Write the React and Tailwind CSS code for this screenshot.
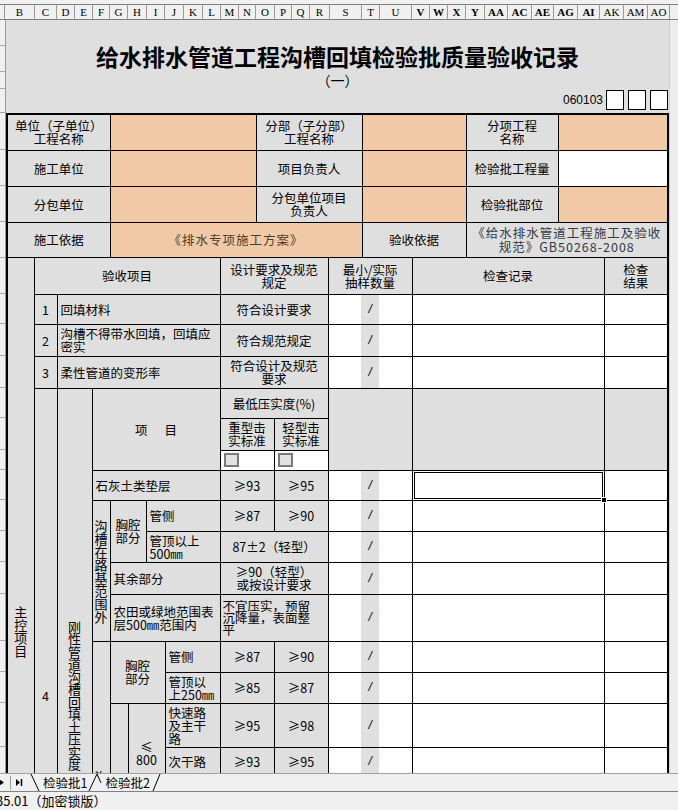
import React from "react";

const cols = [
  ["B", 30], ["C", 22], ["D", 18], ["E", 18], ["F", 17], ["G", 18], ["H", 19], ["I", 18],
  ["J", 19], ["K", 19], ["L", 18], ["M", 18], ["N", 17], ["O", 19], ["P", 17], ["Q", 18],
  ["R", 20], ["S", 32], ["T", 18], ["U", 32], ["V", 18, true], ["W", 18, true], ["X", 18, true],
  ["Y", 19, true], ["AA", 23, true], ["AC", 24, true], ["AE", 22, true], ["AG", 24, true],
  ["AI", 22, true], ["AK", 24], ["AM", 24], ["AO", 22],
];

// row boundaries shown in the little row-header strip on the left
const stripRows = [26, 26, 17, 24, 37, 36, 36, 36, 36, 30, 32, 32, 30, 32, 20, 30, 31, 31, 32, 47, 31, 31, 44, 40];

const cell = "border border-black p-0 text-center align-middle";
const gray = "bg-[#dfdfdf]";
const orange = "bg-[#f1c9a6]";

const V = ({ t, lh = "leading-[13px]" }) => (
  <div className={`mx-auto w-[13px] break-all text-[13px] ${lh}`}>{t}</div>
);

const Check = () => (
  <td className="border border-black p-0 pl-[3px] text-left align-middle bg-white">
    <span className="block w-[15px] h-[14px] border-2 border-[#7a7a7a] bg-[#e2e2e2]" />
  </td>
);

const Tail = ({ sel }) => (
  <>
    <td className="border border-black border-r-0 p-0 bg-white" />
    <td className="border-y border-black p-0 text-center align-middle bg-[#dfdfdf] font-['Liberation_Sans',sans-serif] text-[12px] italic">/</td>
    <td className="border border-black border-l-0 p-0 bg-white" />
    <td className={`${cell} bg-white ${sel ? "relative" : ""}`}>
      {sel && (
        <div className="absolute inset-0 border border-white">
          <div className="h-full w-full border border-black" />
          <div className="absolute -right-[4px] -bottom-[4px] w-[6px] h-[6px] bg-black border border-white" />
        </div>
      )}
    </td>
    <td className={`${cell} bg-white`} />
  </>
);

const Left = ({ children, span = 1, rows = 1 }) => (
  <td colSpan={span} rowSpan={rows} className={`${cell} ${gray} text-left pl-[3px]`}>{children}</td>
);
const G = ({ children, span = 1, rows = 1, extra = "" }) => (
  <td colSpan={span} rowSpan={rows} className={`${cell} ${gray} ${extra}`}>{children}</td>
);

const lowRows = [
  ["快速路<br>及主干<br>路", "≥95", "≥98", 44],
  ["次干路", "≥93", "≥95", 28],
  ["支路", "≥90", "≥92", 28],
  ["快速路<br>及主干<br>路", "≥93", "≥95", 44],
  ["次干路", "≥90", "≥92", 28],
  ["支路", "≥87", "≥90", 28],
  ["快速路<br>及主干<br>路", "≥87", "≥90", 44],
  ["次干路", "≥87", "≥90", 28],
  ["支路", "≥87", "≥90", 28],
];
const depth = ["≤<br>800", "800～<br>1500", "＞<br>1500"];

const Lines = ({ s }) =>
  s.split("<br>").map((p, i) => (
    <React.Fragment key={i}>
      {i > 0 && <br />}
      {p}
    </React.Fragment>
  ));

export default function App() {
  return (
    <div className="w-[678px] h-[810px] overflow-hidden bg-[#dfdfdf] text-black font-['Noto_Sans_CJK_SC',sans-serif]">
      {/* column letters */}
      <div className="h-[20px] bg-[#f0f0f0]">
        <div className="h-[4px]" />
        <div className="flex h-[16px] border-y border-[#7f7f7f] font-['Liberation_Serif',serif] text-[11px] leading-[14px]">
          <div className="w-[5px] border-r border-[#9a9a9a]" />
          {cols.map(([l, w, bold]) => (
            <div
              key={l}
              style={{ width: w }}
              className={`shrink-0 border-r border-[#9a9a9a] text-center ${bold ? "font-bold" : ""}`}
            >
              {l}
            </div>
          ))}
          <div className="flex-1" />
        </div>
      </div>

      {/* sheet */}
      <div className="flex h-[753px] overflow-hidden">
        <div className="w-[6px] shrink-0 flex flex-col bg-[#f0f0f0] border-r border-[#9a9a9a]">
          {stripRows.map((h, i) => (
            <div key={i} style={{ height: h }} className="shrink-0 border-b border-[#a8a8a8]" />
          ))}
        </div>

        <div className="w-[663px] shrink-0">
          <div className="mt-[25px] text-center text-[23px] leading-[23px] font-bold">
            给水排水管道工程沟槽回填检验批质量验收记录
          </div>
          <div className="mt-[4px] text-center text-[14px] leading-[16px]">（一）</div>
          <div className="mt-[2px] flex h-[20px] items-center justify-end gap-[4px] pr-[1px]">
            <span className="mr-[-1px] font-['Liberation_Sans',sans-serif] text-[12px]">060103</span>
            <span className="h-[20px] w-[18px] border border-black bg-white" />
            <span className="h-[20px] w-[18px] border border-black bg-white" />
            <span className="h-[20px] w-[18px] border border-black bg-white" />
          </div>

          <div className="mt-[3px] border-x-2 border-t-2 border-black">
            {/* header info */}
            <div className="border-b border-black">
              <table className="w-full table-fixed border-collapse border-hidden text-[12.5px] leading-[13px]">
                <colgroup>
                  <col className="w-[102px]" />
                  <col className="w-[146px]" />
                  <col className="w-[106px]" />
                  <col className="w-[104px]" />
                  <col className="w-[92px]" />
                  <col className="w-[109px]" />
                </colgroup>
                <tbody>
                  <tr className="h-[35px]">
                    <G>单位（子单位）<br />工程名称</G>
                    <td className={`${cell} ${orange}`} />
                    <G>分部（子分部）<br />工程名称</G>
                    <td className={`${cell} ${orange}`} />
                    <G>分项工程<br />名称</G>
                    <td className={`${cell} ${orange}`} />
                  </tr>
                  <tr className="h-[36px]">
                    <G>施工单位</G>
                    <td className={`${cell} ${orange}`} />
                    <G>项目负责人</G>
                    <td className={`${cell} ${orange}`} />
                    <G>检验批工程量</G>
                    <td className={`${cell} bg-white`} />
                  </tr>
                  <tr className="h-[36px]">
                    <G>分包单位</G>
                    <td className={`${cell} ${orange}`} />
                    <G>分包单位项目<br />负责人</G>
                    <td className={`${cell} ${orange}`} />
                    <G>检验批部位</G>
                    <td className={`${cell} ${orange}`} />
                  </tr>
                  <tr className="h-[35px]">
                    <G>施工依据</G>
                    <td colSpan={2} className={`${cell} ${orange} text-[#4a3d28] tracking-[1px]`}>《排水专项施工方案》</td>
                    <G>验收依据</G>
                    <G span={2} extra="text-[#333a44] leading-[14px] tracking-[1px]">
                      《给水排水管道工程施工及验收<br />规范》GB50268-2008
                    </G>
                  </tr>
                </tbody>
              </table>
            </div>

            {/* main control items */}
            <table className="w-full table-fixed border-collapse border-hidden text-[12.5px] leading-[13px]">
              <colgroup>
                <col className="w-[26px]" />
                <col className="w-[23px]" />
                <col className="w-[35px]" />
                <col className="w-[18px]" />
                <col className="w-[18px]" />
                <col className="w-[18px]" />
                <col className="w-[19px]" />
                <col className="w-[55px]" />
                <col className="w-[54px]" />
                <col className="w-[54px]" />
                <col className="w-[33px]" />
                <col className="w-[18px]" />
                <col className="w-[33px]" />
                <col className="w-[192px]" />
                <col className="w-[63px]" />
              </colgroup>
              <tbody>
                <tr className="h-[36px]">
                  <G rows={23}><V t="主控项目" /></G>
                  <G span={7}>验收项目</G>
                  <G span={2}>设计要求及规范<br />规定</G>
                  <G span={3}>最小/实际<br />抽样数量</G>
                  <G>检查记录</G>
                  <G>检查<br />结果</G>
                </tr>
                <tr className="h-[30px]">
                  <G>1</G>
                  <Left span={6}>回填材料</Left>
                  <G span={2}>符合设计要求</G>
                  <Tail />
                </tr>
                <tr className="h-[32px]">
                  <G>2</G>
                  <Left span={6}>沟槽不得带水回填，回填应<br />密实</Left>
                  <G span={2}>符合规范规定</G>
                  <Tail />
                </tr>
                <tr className="h-[32px]">
                  <G>3</G>
                  <Left span={6}>柔性管道的变形率</Left>
                  <G span={2}>符合设计及规范<br />要求</G>
                  <Tail />
                </tr>
                <tr className="h-[30px]">
                  <G rows={19}>4</G>
                  <G rows={19}><V t="刚性管道沟槽回填土压实度" lh="leading-[12.5px]" /></G>
                  <G span={5} rows={3}>
                    项<span className="inline-block w-[17px]" />目
                  </G>
                  <G span={2}>最低压实度(%)</G>
                  <G span={3} rows={3} />
                  <G rows={3} />
                  <G rows={3} />
                </tr>
                <tr className="h-[32px]">
                  <G>重型击<br />实标准</G>
                  <G>轻型击<br />实标准</G>
                </tr>
                <tr className="h-[20px]">
                  <Check />
                  <Check />
                </tr>
                <tr className="h-[30px]">
                  <Left span={5}>石灰土类垫层</Left>
                  <G>≥93</G>
                  <G>≥95</G>
                  <Tail sel />
                </tr>
                <tr className="h-[31px]">
                  <G rows={4}><V t="沟槽在路基范围外" /></G>
                  <G span={2} rows={2}>胸腔<br />部分</G>
                  <Left span={2}>管侧</Left>
                  <G>≥87</G>
                  <G>≥90</G>
                  <Tail />
                </tr>
                <tr className="h-[31px]">
                  <Left span={2}>管顶以上<br />500㎜</Left>
                  <G span={2}>87±2（轻型）</G>
                  <Tail />
                </tr>
                <tr className="h-[32px]">
                  <Left span={4}>其余部分</Left>
                  <G span={2}>≥90（轻型）<br />或按设计要求</G>
                  <Tail />
                </tr>
                <tr className="h-[47px]">
                  <Left span={4}>农田或绿地范围表<br />层500㎜范围内</Left>
                  <td colSpan={2} className={`${cell} ${gray} text-left pl-[2px] leading-[12px]`}>
                    不宜压实，预留<br />沉降量，表面整<br />平
                  </td>
                  <Tail />
                </tr>
                <tr className="h-[31px]">
                  <G rows={11}><V t="沟槽在路基范围内" /></G>
                  <G span={3} rows={2}>胸腔<br />部分</G>
                  <Left>管侧</Left>
                  <G>≥87</G>
                  <G>≥90</G>
                  <Tail />
                </tr>
                <tr className="h-[31px]">
                  <Left>管顶以<br />上250㎜</Left>
                  <G>≥85</G>
                  <G>≥87</G>
                  <Tail />
                </tr>
                {lowRows.map(([label, a, b, h], i) => (
                  <tr key={i} style={{ height: h }}>
                    {i === 0 && <G rows={9}><V t="由路槽底算起的深度范围（㎜）" /></G>}
                    {i % 3 === 0 && (
                      <G span={2} rows={3}><Lines s={depth[i / 3]} /></G>
                    )}
                    <Left><Lines s={label} /></Left>
                    <G>{a}</G>
                    <G>{b}</G>
                    <Tail />
                  </tr>
                ))}
              </tbody>
            </table>
          </div>
        </div>

        <div className="flex-1 bg-[#ededed] border-l border-[#d0d0d0]" />
      </div>

      {/* sheet tabs */}
      <div className="flex h-[18px] items-stretch border-t border-[#a0a0a0] bg-[#f0f0f0] text-[12.5px] leading-[17px]">
        <svg width="30" height="17" className="shrink-0">
          <polygon points="-1,5 4,8.5 -1,12" fill="#000" />
          <line x1="10.5" y1="2" x2="10.5" y2="16" stroke="#9a9a9a" />
          <polygon points="16,5 20,8.5 16,12" fill="#000" />
          <line x1="21.5" y1="5" x2="21.5" y2="12" stroke="#000" strokeWidth="1.5" />
        </svg>
        <svg width="11" height="17" className="shrink-0">
          <line x1="1" y1="0" x2="9" y2="17" stroke="#000" />
        </svg>
        <span className="shrink-0 pl-[2px]">检验批1</span>
        <svg width="18" height="17" className="shrink-0">
          <line x1="2" y1="17" x2="10" y2="0" stroke="#000" />
          <line x1="10" y1="0" x2="14" y2="9" stroke="#000" />
        </svg>
        <span className="shrink-0">检验批2</span>
        <svg width="12" height="17" className="shrink-0">
          <line x1="3" y1="17" x2="10" y2="0" stroke="#000" />
        </svg>
      </div>

      {/* status bar */}
      <div className="h-[19px] border-t border-[#808080] bg-[#f0f0f0] text-[13px] leading-[18px]">
        <span className="ml-[-4px]">35.01（加密锁版）</span>
      </div>
    </div>
  );
}
